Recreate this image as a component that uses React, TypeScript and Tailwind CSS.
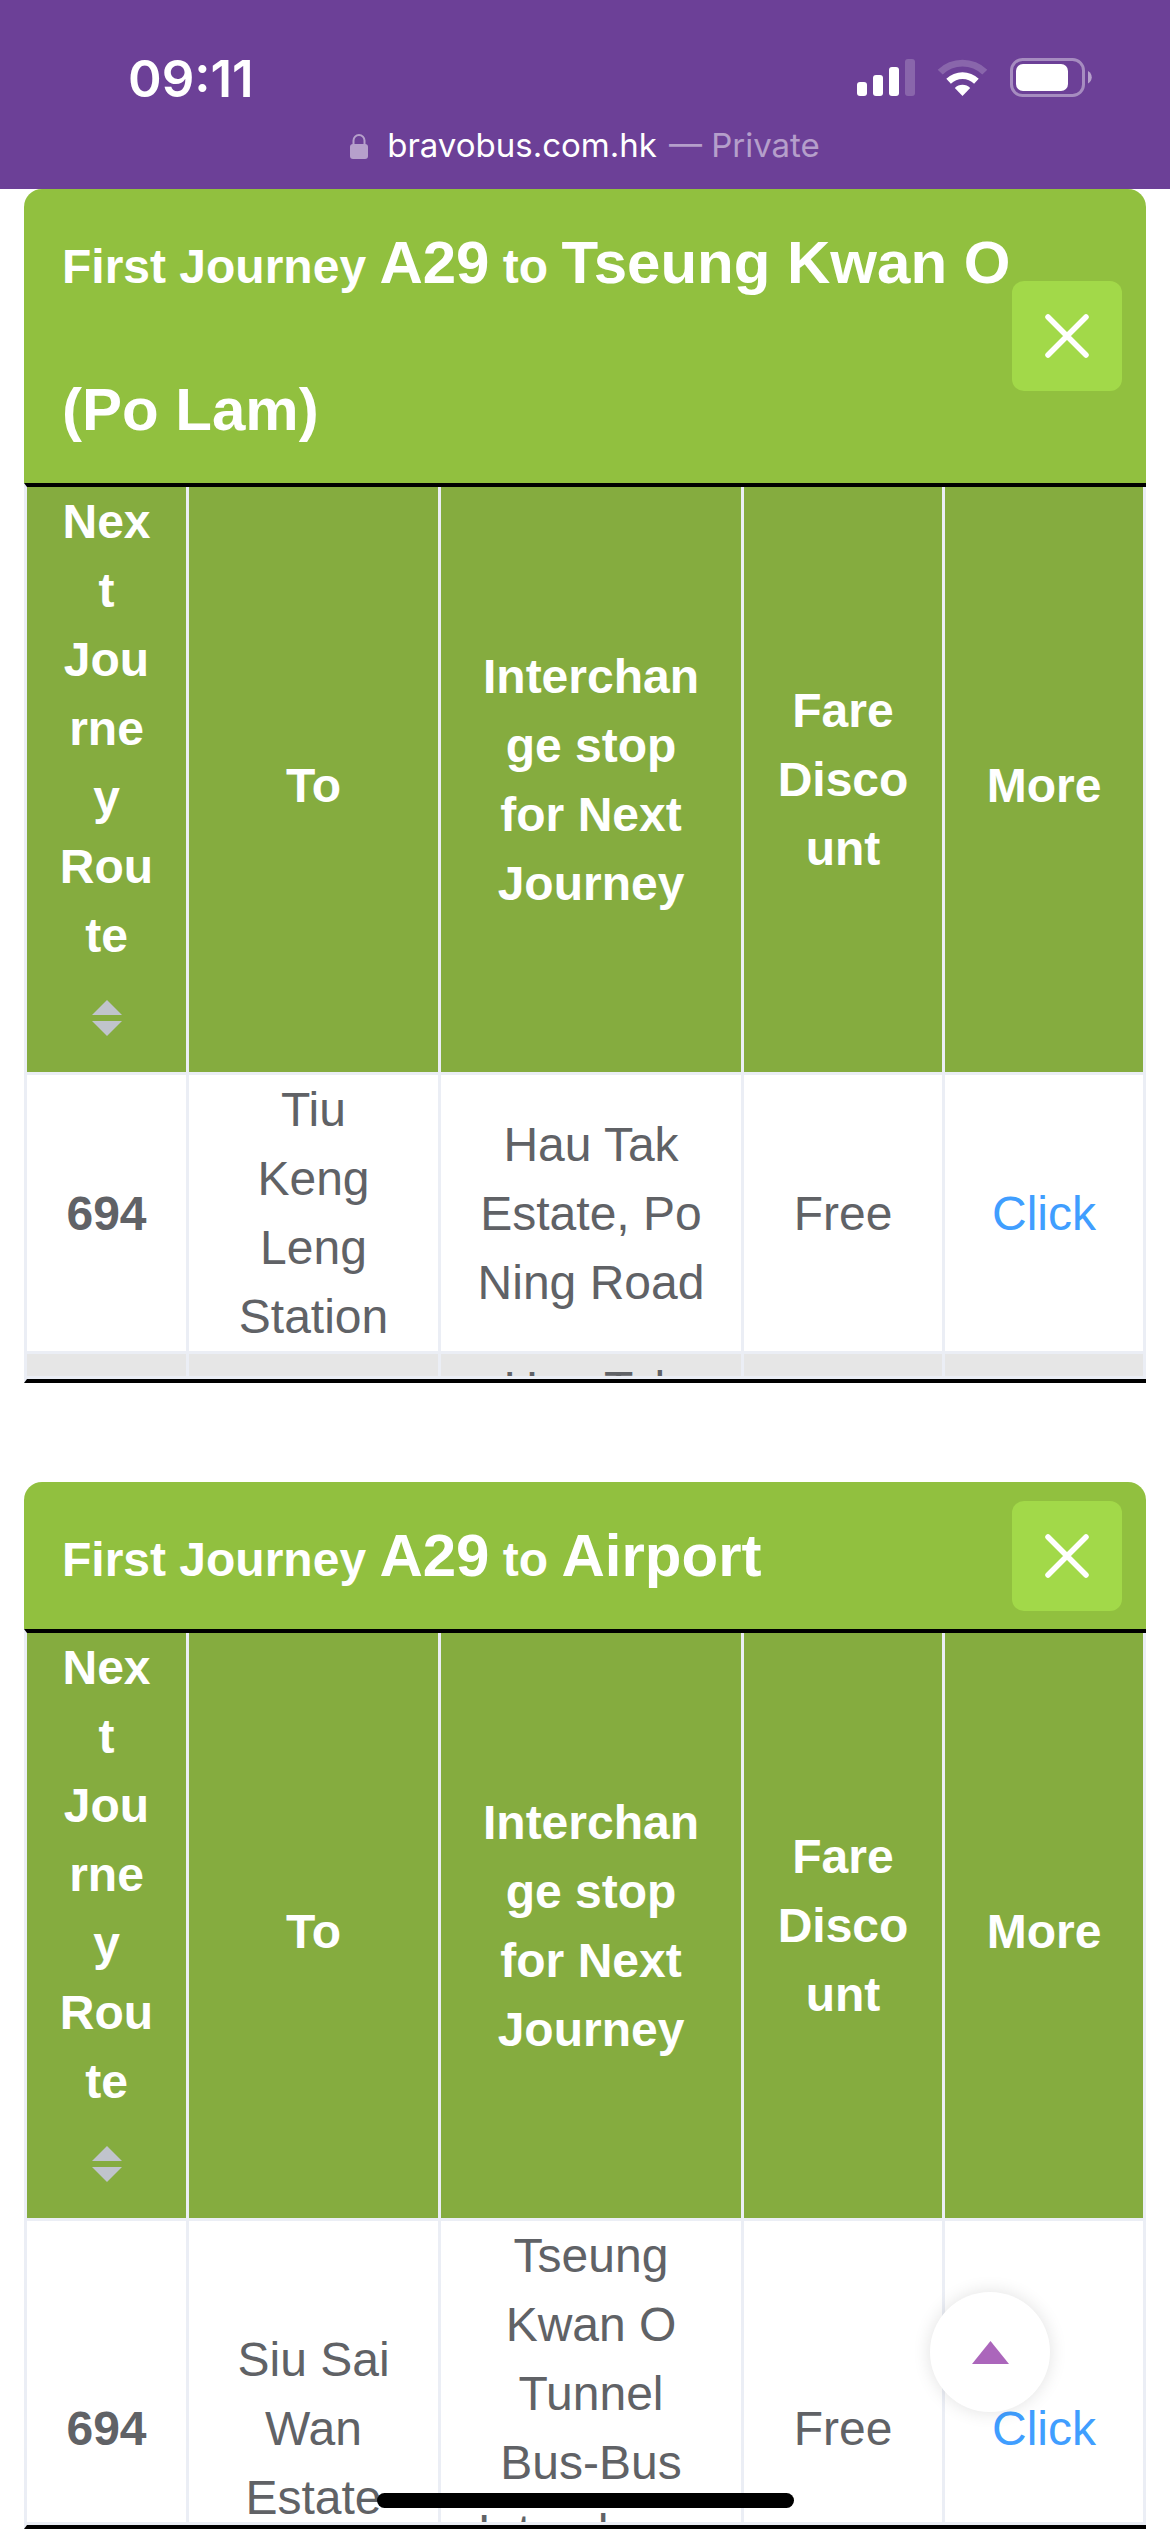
import React from "react";

type Row = { route: string; to: string; stop: string; fare: string; more: string };
type Journey = { route: string; destination: string; rows: Row[] };

const journeys: Journey[] = [
  {
    route: "A29",
    destination: "Tseung Kwan O (Po Lam)",
    rows: [
      {
        route: "694",
        to: "Tiu Keng Leng Station",
        stop: "Hau Tak Estate, Po Ning Road",
        fare: "Free",
        more: "Click",
      },
      { route: "", to: "", stop: "Hau Tak Estate, Po Ning Road", fare: "", more: "" },
    ],
  },
  {
    route: "A29",
    destination: "Airport",
    rows: [
      {
        route: "694",
        to: "Siu Sai Wan Estate",
        stop: "Tseung Kwan O Tunnel Bus-Bus Interchange",
        fare: "Free",
        more: "Click",
      },
    ],
  },
];

function StatusIcons() {
  return (
    <svg width="236" height="40" viewBox="0 0 236 40" fill="none" aria-label="Signal, Wi-Fi and battery">
      <g fill="#fff">
        <rect x="1" y="24" width="10" height="14" rx="3" />
        <rect x="17" y="17" width="10" height="21" rx="3" />
        <rect x="33" y="9" width="10" height="29" rx="3" />
        <rect x="49" y="1" width="10" height="37" rx="3" opacity="0.2" />
      </g>
      <path
        d="M81.700 11.800 A35.500 35.500 0 0 1 131.300 11.800 L126.300 16.500 A28.500 28.500 0 0 0 86.700 16.500 Z"
        fill="#fff"
        opacity="0.2"
      />
      <path
        d="M90.300 20.700 A23.500 23.500 0 0 1 122.700 20.700 L118.100 25.700 A16.500 16.500 0 0 0 94.900 25.700 Z"
        fill="#fff"
      />
      <path d="M98.800 30.000 A11 11 0 0 1 114.200 30.000 L106.500 38 Z" fill="#fff" />
      <rect x="155.500" y="1.500" width="72" height="36" rx="11" stroke="#fff" strokeWidth="3" opacity="0.4" />
      <rect x="160" y="6" width="52" height="27" rx="7" fill="#fff" />
      <path d="M232 13 C237 15.500 237 23 232 25.500 Z" fill="#fff" opacity="0.5" />
    </svg>
  );
}

function BrowserBar() {
  return (
    <header className="flex h-[189px] flex-col bg-[#6c4097] pt-12 font-[Inter,sans-serif] text-white">
      <div className="flex h-[60px] items-center justify-between pr-[78px] pl-32">
        <time className="text-[51px] leading-none font-semibold">09:11</time>
        <StatusIcons />
      </div>
      <div className="flex h-[76px] items-center justify-center text-[33px]">
        <svg width="18" height="26" viewBox="0 0 18 26" fill="none" className="mr-[19px] opacity-50" aria-hidden="true">
          <path d="M3.500 12 V7.500 a5.500 5.500 0 0 1 11 0 V12" stroke="#fff" strokeWidth="2" />
          <rect x="0" y="11" width="18" height="15" rx="3" fill="#fff" />
        </svg>
        <span>bravobus.com.hk</span>
        <span className="ml-3 text-white/50">— Private</span>
      </div>
    </header>
  );
}

function SortButton() {
  return (
    <button type="button" aria-label="Sort by route" className="flex h-[102px] w-full justify-center pt-[30px]">
      <svg width="30" height="36" viewBox="0 0 30 36" fill="#c0c4cc" aria-hidden="true">
        <path d="M15 0 L30 15 H0 Z" />
        <path d="M15 36 L30 21 H0 Z" />
      </svg>
    </button>
  );
}

const headCell = "border-r-[3px] border-b-[3px] border-[#ebeef5] bg-[#85ac3f] px-[30px] text-center font-bold text-white";
const shortHeadCell = `${headCell} pt-3`;
const bodyCell = "border-r-[3px] border-b-[3px] border-[#ebeef5] px-[30px] text-center";

function JourneyCard({ route, destination, rows }: Journey) {
  return (
    <section>
      <div className="flex items-center justify-between rounded-t-[18px] bg-[#91c03f] pr-6 pl-[38px] text-white">
        <h2 className="min-w-0 flex-1 text-[60px] leading-[147px] font-bold">
          <span className="text-[48px] leading-none">First Journey </span>
          {route}
          <span className="text-[48px] leading-none"> to </span>
          {destination}
        </h2>
        <button
          type="button"
          aria-label="Close"
          className="flex size-[110px] shrink-0 items-center justify-center rounded-xl bg-[#a2d949]"
        >
          <svg width="44" height="44" viewBox="0 0 44 44" stroke="#fff" strokeWidth="5.500" strokeLinecap="round" aria-hidden="true">
            <path d="M3 3 L41 41 M41 3 L3 41" />
          </svg>
        </button>
      </div>
      <div className="flex h-[900px] flex-col border-y-4 border-l-[3px] border-y-black border-l-[#ebeef5]">
        <div className="min-h-0 flex-1 overflow-hidden border-b-[3px] border-[#ebeef5]">
          <table className="w-full table-fixed border-separate border-spacing-0 text-[48px] leading-[69px] wrap-break-word text-[#606266]">
            <colgroup>
              <col className="w-[162px]" />
              <col className="w-[252px]" />
              <col />
              <col className="w-[201px]" />
              <col className="w-[201px]" />
            </colgroup>
            <thead>
              <tr>
                <th scope="col" className={headCell}>
                  Next Journey Route
                  <SortButton />
                </th>
                <th scope="col" className={shortHeadCell}>To</th>
                <th scope="col" className={headCell}>Interchange stop for Next Journey</th>
                <th scope="col" className={headCell}>Fare Discount</th>
                <th scope="col" className={shortHeadCell}>More</th>
              </tr>
            </thead>
            <tbody>
              {rows.map((row, i) => (
                <tr key={i} className="even:bg-[#e6e6e6]">
                  <td className={bodyCell}>
                    <strong className="font-bold">{row.route}</strong>
                  </td>
                  <td className={bodyCell}>{row.to}</td>
                  <td className={bodyCell}>{row.stop}</td>
                  <td className={bodyCell}>{row.fare}</td>
                  <td className={bodyCell}>
                    {row.more && (
                      <button type="button" className="text-[#409eff]">
                        {row.more}
                      </button>
                    )}
                  </td>
                </tr>
              ))}
            </tbody>
          </table>
        </div>
      </div>
    </section>
  );
}

export default function App() {
  return (
    <div className="min-h-screen bg-white font-['Liberation_Sans',Arial,sans-serif]">
      <BrowserBar />
      <main className="flex flex-col gap-[99px] px-6">
        {journeys.map((journey) => (
          <JourneyCard key={journey.destination} {...journey} />
        ))}
      </main>
      <button
        type="button"
        aria-label="Back to top"
        className="fixed right-[120px] bottom-[120px] flex size-[120px] items-center justify-center rounded-full bg-white shadow-[0_0_18px_rgba(0,0,0,0.12)]"
      >
        <svg width="37" height="23" viewBox="0 0 37 23" fill="#ab66bb" aria-hidden="true">
          <path d="M18.500 0 L37 23 H0 Z" />
        </svg>
      </button>
      <div className="fixed inset-x-0 bottom-6 mx-auto h-[15px] w-[417px] rounded-full bg-black" />
    </div>
  );
}
